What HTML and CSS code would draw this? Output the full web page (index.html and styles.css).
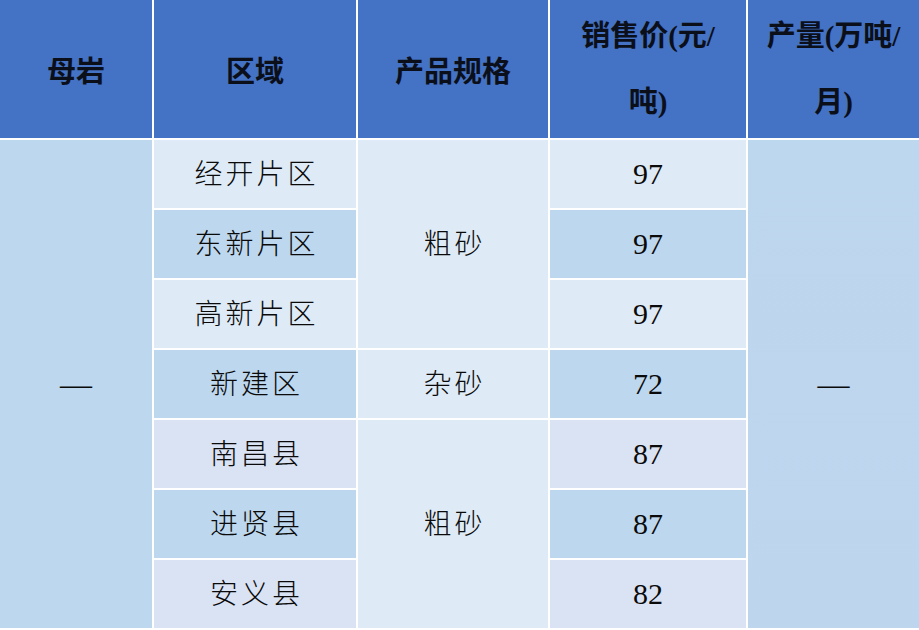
FILE: index.html
```html
<!DOCTYPE html>
<html lang="zh-CN">
<head>
<meta charset="utf-8">
<title>母岩 销售价</title>
<link rel="stylesheet" href="styles.css">
</head>
<body>
<div class="grid">
  <div class="cell head">母岩</div>
  <div class="cell head">区域</div>
  <div class="cell head">产品规格</div>
  <div class="cell head two">销售价(元/<br>吨)</div>
  <div class="cell head two">产量(万吨/<br>月)</div>

  <div class="cell dark dash c1">—</div>

  <div class="cell light cn r1 c2">经开片区</div>
  <div class="cell light cn spec1 c3">粗砂</div>
  <div class="cell light num r1 c4">97</div>
  <div class="cell dark dash c5">—</div>

  <div class="cell dark cn r2 c2">东新片区</div>
  <div class="cell dark num r2 c4">97</div>

  <div class="cell light cn r3 c2">高新片区</div>
  <div class="cell light num r3 c4">97</div>

  <div class="cell dark cn r4 c2">新建区</div>
  <div class="cell light cn r4 c3">杂砂</div>
  <div class="cell dark num r4 c4">72</div>

  <div class="cell lav cn r5 c2">南昌县</div>
  <div class="cell light cn spec3 c3">粗砂</div>
  <div class="cell lav num r5 c4">87</div>

  <div class="cell dark cn r6 c2">进贤县</div>
  <div class="cell dark num r6 c4">87</div>

  <div class="cell lav cn r7 c2">安义县</div>
  <div class="cell lav num r7 c4">82</div>
</div>
</body>
</html>
```
FILE: styles.css
```css
html, body {
  margin: 0;
  padding: 0;
  background: #ffffff;
}
.grid {
  display: grid;
  width: 919px;
  grid-template-columns: 152px 202px 190px 196px 171px;
  grid-template-rows: 138px repeat(7, 68px);
  gap: 2px;
  background: #ffffff;
}
.cell {
  display: flex;
  align-items: center;
  justify-content: center;
  text-align: center;
  color: #0a0a0a;
}
.head {
  background: #4472c4;
  font-family: "Liberation Serif", "Noto Sans CJK SC", sans-serif;
  font-weight: 700;
  font-size: 29px;
  color: #0b0f1a;
}
.head.two {
  line-height: 66px;
}
.dark { background: #bdd7ee; }
.light { background: #deeaf6; }
.lav { background: #dae3f3; }
.cn {
  font-family: "Liberation Serif", "Noto Sans CJK SC", serif;
  font-weight: 300;
  font-size: 28px;
  letter-spacing: 3px;
  text-indent: 3px;
  line-height: 1;
  padding-top: 1px;
}
.num {
  font-family: "Liberation Serif", serif;
  font-size: 30px;
}
.dash {
  font-family: "Liberation Serif", serif;
  font-size: 32px;
}
.c1 { grid-column: 1; grid-row: 2 / span 7; }
.c2 { grid-column: 2; }
.c3 { grid-column: 3; }
.c4 { grid-column: 4; }
.c5 { grid-column: 5; grid-row: 2 / span 7; background: linear-gradient(180deg, #bdd7ee 0%, #bed5ee 100%); }
.r1 { grid-row: 2; }
.r2 { grid-row: 3; }
.r3 { grid-row: 4; }
.r4 { grid-row: 5; }
.r5 { grid-row: 6; }
.r6 { grid-row: 7; }
.r7 { grid-row: 8; }
.spec1 { grid-row: 2 / span 3; }
.spec3 { grid-row: 6 / span 3; }
```
